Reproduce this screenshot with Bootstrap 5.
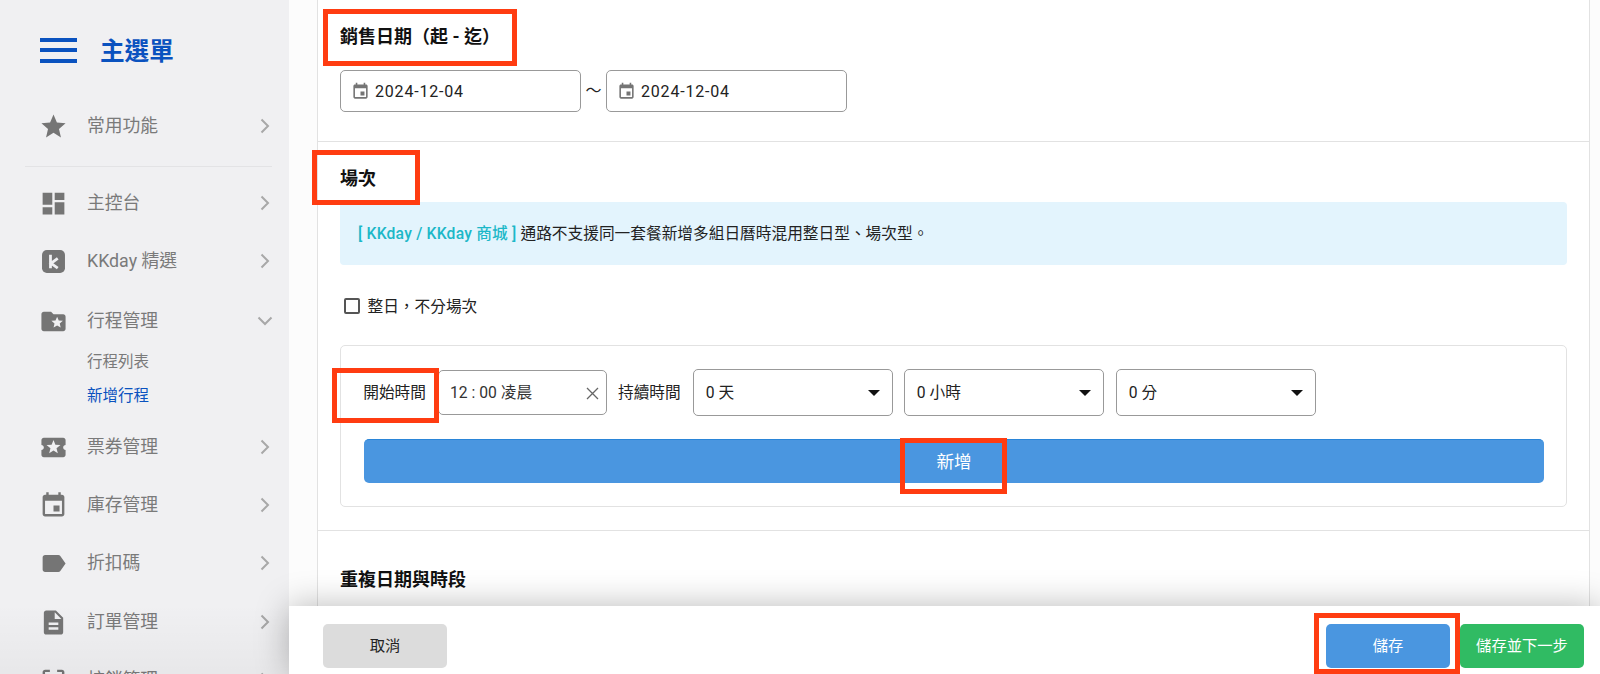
<!DOCTYPE html>
<html lang="zh-Hant">
<head>
<meta charset="utf-8">
<title>新增行程</title>
<link href="https://cdn.jsdelivr.net/npm/bootstrap@5.3.0/dist/css/bootstrap.min.css" rel="stylesheet">
<style>
html,body{height:674px;overflow:hidden}
body{position:relative;font-family:Roboto,"Noto Sans CJK TC",sans-serif;color:#222;font-size:15.7px;background:#fff}
.side-col{width:289px;flex:none;background:#f0f0f2;height:674px;overflow:hidden;position:relative}
.side-col::after{content:"";position:absolute;left:0;right:0;bottom:0;height:70px;background:linear-gradient(rgba(0,0,0,0),rgba(0,0,0,.035))}
.side-head{height:96px;padding:8px 0 0 40px;color:#0a52bf;font-size:24.6px;font-weight:700;gap:23px}
.burger{width:37px;height:25px;border-top:4px solid #0a52bf;border-bottom:4px solid #0a52bf;position:relative;margin-top:-4px}
.burger::after{content:"";position:absolute;left:0;right:0;top:6.5px;height:4px;background:#0a52bf}
.side-item{height:58px;padding:2px 19px 0 38.5px;color:#7a7a7a;font-size:17.8px;gap:19.5px}
.side-item svg.ic{width:29px;height:29px;fill:#757575;flex:none}
.chev{width:10px;height:16px;fill:none;stroke:#a8a8a8;stroke-width:2;flex:none}
.chev-d{width:16px;height:10px;fill:none;stroke:#a8a8a8;stroke-width:2;flex:none;margin-right:-3px}
.side-rule{margin:12px 17px 6px 25px;border-top:1px solid #e3e3e5}
.item-gap{margin-top:2px}
.item-nudge{margin-top:1px}
.side-sub{height:34px;padding-left:87px;font-size:15.5px;color:#7a7a7a;line-height:34px}
.side-sub.on{color:#0a52bf}
.sub-first{margin-top:-4px}
.sub-last{margin-bottom:4px}
.main-col{height:674px;min-width:0}
.scroll-zone{overflow:hidden;padding-left:28px;padding-right:10px;background:#fcfcfc}
.panel{background:#fff;border-left:1px solid #e2e2e2;border-right:1px solid #e2e2e2;min-height:100%}
.sec{padding-left:22px;padding-right:22px;border-bottom:1px solid #e2e2e2}
.sec-a{padding-top:25px;padding-bottom:29px}
.sec-b{padding-top:25px;padding-bottom:23px}
.sec-c{padding-top:37px;border-bottom:0}
.sec-title{font-size:18px;font-weight:700;line-height:24px;color:#111;margin:0}
.date-box{width:241px;height:42px;border:1px solid #999;border-radius:5px;padding:1px 10px 0;font-size:16px;letter-spacing:.8px;gap:5px;color:#222;background:#fff}
.date-box svg{width:19px;height:19px;fill:#757575;flex:none}
.tilde{width:25px;text-align:center;font-size:16px}
.mt-date{margin-top:21px}
.note-box{margin:11px 0 0;height:63px;padding:0 18px;background:#e3f4fd;border:0;border-radius:4px;color:#222;font-size:15.7px}
.note-tag{color:#1cb8c8;font-weight:500;margin-right:4px;letter-spacing:.2px}
.all-day{margin-top:29px;height:24px;padding-left:3.500px;gap:8px}
.all-day label{padding-top:2px}
.all-day .form-check-input{width:16px;height:16px;margin:0;border:2px solid #555;border-radius:2px;flex:none}
.slot-box{margin-top:27px;height:162px;border:1px solid #e2e2e2;border-radius:5px;padding:23px 22px 0 0}
.slot-label{width:97px;text-align:right;padding-right:12px;flex:none;color:#222;font-size:15.7px}
.time-box{width:169px;height:45px;border:1px solid #999;border-radius:5px;padding:1px 7px 0 11px;font-size:15.7px;color:#333}
.time-x{width:13px;height:13px;stroke:#666;stroke-width:1.3;fill:none}
.dur-label{margin:0 12px 0 11px;font-size:15.7px}
.pick-box{width:200px;height:47px;border:1px solid #999;border-radius:5px;padding:1px 12px 0;font-size:15.7px;margin-right:11px;background:#fff}
.pick-last{margin-left:1px}
.caret-down{width:0;height:0;border-left:6px solid transparent;border-right:6px solid transparent;border-top:6px solid #111}
.add-wrap{padding-left:23px;margin-top:23px}
.btn-add{height:44px;background:#4a96e0;border:0;border-top:1px solid #2a85d8;color:#fff;border-radius:5px;font-size:17.6px;padding:1px 0 0}
.foot-bar{height:68px;flex:none;background:#fff;position:relative;z-index:2;box-shadow:0 0 34px rgba(0,0,0,.28);padding:18px 16px 6px 34px}
.foot-btn{width:124px;height:44px;border:0;border-radius:5px;font-size:15.3px;padding:0}
.foot-cancel{background:#dcdcdc;color:#222}
.foot-save{background:#4a96e0;color:#fff;margin-right:10px}
.foot-next{background:#30bb63;color:#fff}
.mark-box{position:absolute;border:5px solid #ff3c11;z-index:5;pointer-events:none}
.mk1{left:323px;top:9px;width:194px;height:57px}
.mk2{left:312px;top:150px;width:108px;height:55px}
.mk3{left:332px;top:368px;width:107px;height:55px}
.mk4{left:900px;top:438px;width:107px;height:56px}
.mk5{left:1314px;top:613px;width:146px;height:61px}
</style>
</head>
<body>
<div class="d-flex">
  <nav class="side-col">
    <div class="side-head d-flex align-items-center"><span class="burger"></span><span>主選單</span></div>
    <div class="side-item d-flex align-items-center">
      <svg class="ic" viewBox="0 0 24 24"><path d="M12 17.27L18.18 21l-1.64-7.03L22 9.24l-7.19-.61L12 2 9.19 8.63 2 9.24l5.46 4.73L5.82 21z"/></svg>
      <span class="flex-grow-1">常用功能</span>
      <svg class="chev" viewBox="0 0 10 16"><path d="M1.5 1.5L8 8l-6.500 6.500"/></svg>
    </div>
    <div class="side-rule"></div>
    <div class="side-item d-flex align-items-center">
      <svg class="ic" viewBox="0 0 24 24"><path d="M3 13h8V3H3v10zm0 8h8v-6H3v6zm10 0h8V11h-8v10zm0-18v6h8V3h-8z"/></svg>
      <span class="flex-grow-1">主控台</span>
      <svg class="chev" viewBox="0 0 10 16"><path d="M1.5 1.5L8 8l-6.500 6.500"/></svg>
    </div>
    <div class="side-item d-flex align-items-center">
      <svg class="ic" viewBox="0 0 24 24"><rect x="2.500" y="2.500" width="19" height="19" rx="4"/><path d="M9.500 6.500v11M15.500 9.500l-5.500 4 5.500 4" fill="none" stroke="#f0f0f2" stroke-width="2.300"/></svg>
      <span class="flex-grow-1">KKday 精選</span>
      <svg class="chev" viewBox="0 0 10 16"><path d="M1.5 1.5L8 8l-6.500 6.500"/></svg>
    </div>
    <div class="side-item item-gap d-flex align-items-center">
      <svg class="ic" viewBox="0 0 24 24"><path d="M20 6h-8l-2-2H4c-1.100 0-2 .9-2 2v12c0 1.100.9 2 2 2h16c1.100 0 2-.9 2-2V8c0-1.100-.9-2-2-2zm-2.060 11L15 15.280 12.060 17l.78-3.330-2.590-2.240 3.410-.29L15 8l1.340 3.140 3.410.29-2.590 2.240.78 3.330z"/></svg>
      <span class="flex-grow-1">行程管理</span>
      <svg class="chev-d" viewBox="0 0 16 10"><path d="M1.500 1.500L8 8l6.500-6.500"/></svg>
    </div>
    <div class="side-sub sub-first">行程列表</div>
    <div class="side-sub on sub-last">新增行程</div>
    <div class="side-item d-flex align-items-center">
      <svg class="ic" viewBox="0 0 24 24"><path d="M20 12c0-1.100.9-2 2-2V6c0-1.100-.9-2-2-2H4c-1.100 0-1.990.9-1.990 2v4c1.100 0 1.990.9 1.990 2s-.89 2-2 2v4c0 1.100.9 2 2 2h16c1.100 0 2-.9 2-2v-4c-1.100 0-2-.9-2-2zm-4.420 4.800L12 14.500l-3.580 2.300 1.080-4.120-3.290-2.690 4.240-.25L12 5.800l1.540 3.950 4.240.25-3.290 2.690 1.090 4.110z"/></svg>
      <span class="flex-grow-1">票券管理</span>
      <svg class="chev" viewBox="0 0 10 16"><path d="M1.5 1.5L8 8l-6.500 6.500"/></svg>
    </div>
    <div class="side-item d-flex align-items-center">
      <svg class="ic" viewBox="0 0 24 24"><path d="M17 12h-5v5h5v-5zM16 1v2H8V1H6v2H5c-1.110 0-1.990.9-1.990 2L3 19c0 1.100.89 2 2 2h14c1.100 0 2-.9 2-2V5c0-1.100-.9-2-2-2h-1V1h-2zm3 18H5V8h14v11z"/></svg>
      <span class="flex-grow-1">庫存管理</span>
      <svg class="chev" viewBox="0 0 10 16"><path d="M1.5 1.5L8 8l-6.500 6.500"/></svg>
    </div>
    <div class="side-item d-flex align-items-center">
      <svg class="ic" viewBox="0 0 24 24"><path d="M17.630 5.840C17.270 5.330 16.670 5 16 5L5 5.010C3.900 5.010 3 5.900 3 7v10c0 1.100.9 1.990 2 1.990L16 19c.67 0 1.270-.33 1.630-.84L22 12l-4.370-6.160z"/></svg>
      <span class="flex-grow-1">折扣碼</span>
      <svg class="chev" viewBox="0 0 10 16"><path d="M1.5 1.5L8 8l-6.500 6.500"/></svg>
    </div>
    <div class="side-item item-nudge d-flex align-items-center">
      <svg class="ic" viewBox="0 0 24 24"><path d="M14 2H6c-1.100 0-1.990.9-1.990 2L4 20c0 1.100.89 2 1.990 2H18c1.100 0 2-.9 2-2V8l-6-6zm2 16H8v-2h8v2zm0-4H8v-2h8v2zm-3-5V3.500L18.500 9H13z"/></svg>
      <span class="flex-grow-1">訂單管理</span>
      <svg class="chev" viewBox="0 0 10 16"><path d="M1.5 1.5L8 8l-6.500 6.500"/></svg>
    </div>
    <div class="side-item d-flex align-items-center">
      <svg class="ic" viewBox="0 0 24 24"><path d="M3 5v4h2V5h4V3H5c-1.100 0-2 .9-2 2zm2 10H3v4c0 1.100.9 2 2 2h4v-2H5v-4zm14 4h-4v2h4c1.100 0 2-.9 2-2v-4h-2v4zm0-16h-4v2h4v4h2V5c0-1.100-.9-2-2-2z"/></svg>
      <span class="flex-grow-1">核銷管理</span>
      <svg class="chev" viewBox="0 0 10 16"><path d="M1.5 1.5L8 8l-6.500 6.500"/></svg>
    </div>
  </nav>

  <main class="main-col flex-grow-1 d-flex flex-column">
    <div class="scroll-zone flex-grow-1">
      <div class="panel">
        <section class="sec sec-a">
          <h2 class="sec-title">銷售日期（起 - 迄）</h2>
          <div class="d-flex align-items-center mt-date">
            <div class="date-box d-flex align-items-center">
              <svg viewBox="0 0 24 24"><path d="M17 12h-5v5h5v-5zM16 1v2H8V1H6v2H5c-1.110 0-1.990.9-1.990 2L3 19c0 1.100.89 2 2 2h14c1.100 0 2-.9 2-2V5c0-1.100-.9-2-2-2h-1V1h-2zm3 18H5V8h14v11z"/></svg>
              <span>2024-12-04</span>
            </div>
            <span class="tilde">～</span>
            <div class="date-box d-flex align-items-center">
              <svg viewBox="0 0 24 24"><path d="M17 12h-5v5h5v-5zM16 1v2H8V1H6v2H5c-1.110 0-1.990.9-1.990 2L3 19c0 1.100.89 2 2 2h14c1.100 0 2-.9 2-2V5c0-1.100-.9-2-2-2h-1V1h-2zm3 18H5V8h14v11z"/></svg>
              <span>2024-12-04</span>
            </div>
          </div>
        </section>
        <section class="sec sec-b">
          <h2 class="sec-title">場次</h2>
          <div class="alert note-box d-flex align-items-center" role="alert">
            <span class="note-tag">[ KKday / KKday 商城 ]</span><span>通路不支援同一套餐新增多組日曆時混用整日型、場次型。</span>
          </div>
          <div class="all-day d-flex align-items-center">
            <input class="form-check-input" type="checkbox" id="allDay">
            <label for="allDay">整日，不分場次</label>
          </div>
          <div class="slot-box">
            <div class="d-flex align-items-center">
              <span class="slot-label">開始時間</span>
              <div class="time-box d-flex align-items-center justify-content-between">
                <span>12 : 00 凌晨</span>
                <svg class="time-x" viewBox="0 0 13 13"><path d="M1 1l11 11M12 1L1 12"/></svg>
              </div>
              <span class="dur-label">持續時間</span>
              <div class="pick-box d-flex align-items-center justify-content-between"><span>0 天</span><span class="caret-down"></span></div>
              <div class="pick-box d-flex align-items-center justify-content-between"><span>0 小時</span><span class="caret-down"></span></div>
              <div class="pick-box pick-last d-flex align-items-center justify-content-between"><span>0 分</span><span class="caret-down"></span></div>
            </div>
            <div class="add-wrap"><button type="button" class="btn btn-add w-100">新增</button></div>
          </div>
        </section>
        <section class="sec sec-c">
          <h2 class="sec-title">重複日期與時段</h2>
        </section>
      </div>
    </div>
    <footer class="foot-bar d-flex justify-content-between">
      <button type="button" class="btn foot-btn foot-cancel">取消</button>
      <div class="d-flex">
        <button type="button" class="btn foot-btn foot-save">儲存</button>
        <button type="button" class="btn foot-btn foot-next">儲存並下一步</button>
      </div>
    </footer>
  </main>
</div>
<div class="mark-box mk1"></div>
<div class="mark-box mk2"></div>
<div class="mark-box mk3"></div>
<div class="mark-box mk4"></div>
<div class="mark-box mk5"></div>
<script src="https://cdn.jsdelivr.net/npm/bootstrap@5.3.0/dist/js/bootstrap.bundle.min.js"></script>
</body>
</html>
